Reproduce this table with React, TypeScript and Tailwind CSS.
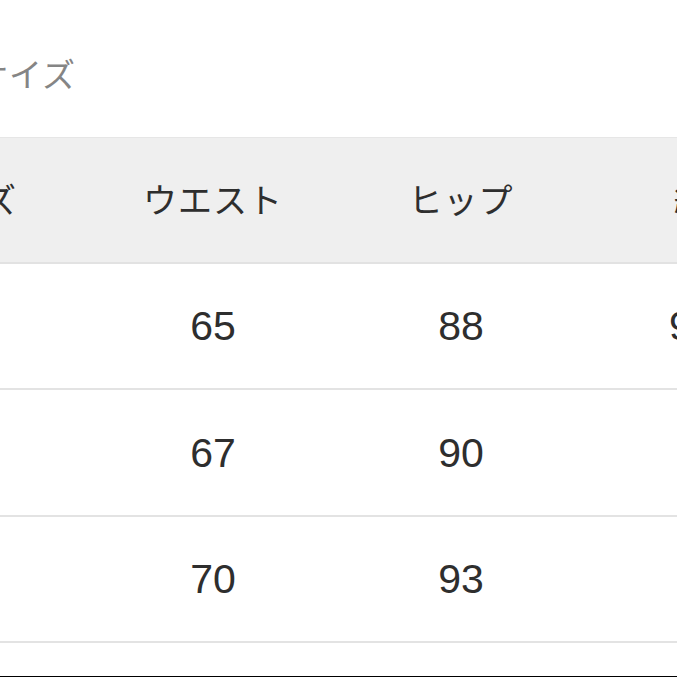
import React from "react";

const headers = ["サイズ", "ウエスト", "ヒップ", "総丈"];

const rows = [
  ["S", "65", "88", "96.5"],
  ["M", "67", "90", "98"],
  ["L", "70", "93", "99"],
];

const App = () => {
  return (
    <div
      className="flex flex-col w-[677px] h-[677px] overflow-hidden bg-white"
      style={{ fontFamily: '"Liberation Sans", "Noto Sans CJK JP", sans-serif' }}
    >
      <div className="h-[137px] flex items-center shrink-0 pt-[14px]">
        <p className="ml-[-25px] text-[33px] tracking-[1px] text-[#858585]">サイズ</p>
      </div>
      <div className="ml-[-159px] w-[1000px] shrink-0">
        <div className="flex h-[127px] bg-[#efefef] border-t border-[#e6e6e6] border-b-2 border-b-[#e2e2e2]">
          {headers.map((h, i) => (
            <div
              key={i}
              className="w-[248px] flex items-center justify-center text-[34px] tracking-[1px] text-[#2e2e2e] pt-[2px]"
            >
              {h}
            </div>
          ))}
        </div>
        {rows.map((r, i) => (
          <div
            key={i}
            className={`flex border-b-2 border-[#e3e3e3] ${i === 1 ? "h-[127px]" : "h-[126px]"}`}
          >
            {r.map((v, j) => (
              <div
                key={j}
                className="w-[248px] flex items-center justify-center text-[41px] text-[#2e2e2e] pt-[2px]"
              >
                {v}
              </div>
            ))}
          </div>
        ))}
      </div>
      <div className="flex-1" />
      <div className="h-px bg-black shrink-0" />
    </div>
  );
};

export default App;
